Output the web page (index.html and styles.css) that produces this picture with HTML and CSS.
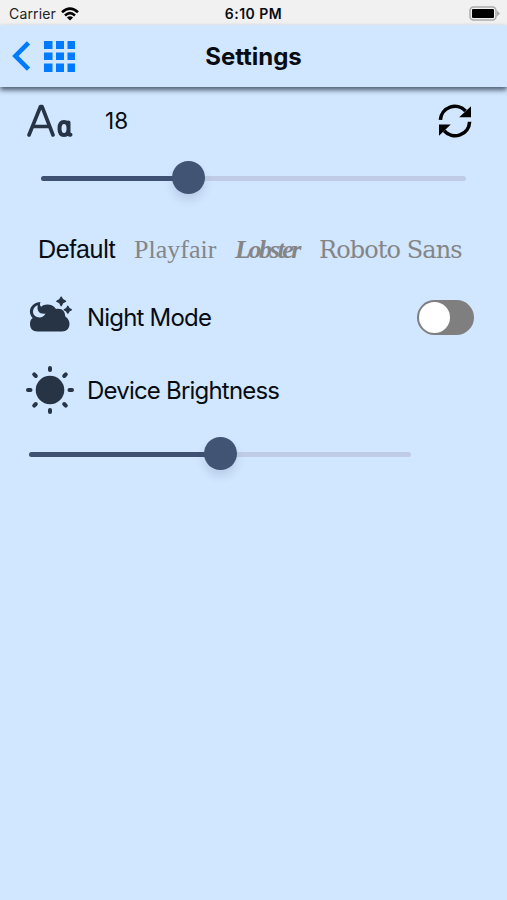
FILE: index.html
```html
<!DOCTYPE html>
<html lang="en">
<head>
    <meta charset="UTF-8">
    <meta name="viewport" content="width=device-width, initial-scale=1.0">
    <title>Settings</title>
    <link rel="stylesheet" href="styles.css">
</head>
<body>

    <div class="status-bar">
        <div class="carrier">
            <span>Carrier</span>
            <svg width="18" height="14" viewBox="0 0 18 14" fill="none" stroke="#000" stroke-width="2.6">
                <path d="M1 5.2Q9 -2 17 5.2"/>
                <path d="M4 8.4Q9 4 14 8.4"/>
                <path d="M9 13.6L5.9 10.6Q9 8 12.1 10.6Z" fill="#000" stroke="none"/>
            </svg>
        </div>
        <span class="time">6:10 PM</span>
        <div class="battery">
            <svg width="31" height="15" viewBox="0 0 31 15">
                <rect x="1" y="1" width="26" height="13" rx="3.5" fill="#f1f1f1" stroke="#aaa" stroke-width="1.5"/>
                <rect x="3" y="3" width="22" height="9" rx="1" fill="#000"/>
                <path d="M28 4.5L31 7.5L28 10.5Z" fill="#aaa"/>
            </svg>
        </div>
    </div>

    <header class="header">
        <div class="nav">
            <svg width="19" height="30" viewBox="0 0 19 30" fill="none" stroke="#007aff" stroke-width="4.6">
                <path d="M16.5 1.8L3.4 15L16.5 28.2"/>
            </svg>
            <svg class="grid-icon" width="31" height="31" viewBox="0 0 31 31" fill="#007aff">
                <path d="M0 0h8.5v8H0zM12 0h8v8h-8zM23.5 0H31v8h-7.5zM0 11.5h8.5v7.5H0zM12 11.5h8v7.5h-8zM23.5 11.5H31v7.5h-7.5zM0 22.5h8.5V31H0zM12 22.5h8V31h-8zM23.5 22.5H31V31h-7.5z"/>
            </svg>
        </div>
        <h1>Settings</h1>
    </header>

    <main class="settings">
        <div class="row size-row">
            <svg class="size-icon" width="46" height="34" viewBox="0 0 46 34" fill="none" stroke="#263445" stroke-linecap="round" stroke-linejoin="round">
                <path d="M2 31L13.5 2.5H15L26 31M6 22.5H22" stroke-width="3.6"/>
                <path d="M41.5 18.5V27Q41.5 31 43.5 30.8M41.5 24Q41.5 18 37 18Q32.5 18 32.5 24.5Q32.5 31 37 31Q41.5 31 41.5 25" stroke-width="4"/>
            </svg>
            <span class="size-value">18</span>
            <svg class="refresh" width="34" height="34" viewBox="0 0 34 34">
                <path d="M2.4 15.8A14.5 14.5 0 0 1 27.5 7M31.6 17.8A14.5 14.5 0 0 1 6.2 26.8" fill="none" stroke="#000" stroke-width="3.6"/>
                <path d="M33 2.3V13.2H21.2ZM1 31.8V20.5H12.7Z"/>
            </svg>
        </div>

        <div class="slider size-slider">
            <div class="fill" style="width: 34.8%"></div>
            <div class="thumb"></div>
        </div>

        <div class="fonts">
            <span class="font-default">Default</span>
            <span class="font-playfair">Playfair</span>
            <span class="font-lobster">Lobster</span>
            <span class="font-roboto">Roboto Sans</span>
        </div>

        <div class="row night-row">
            <svg class="row-icon" width="50" height="50" viewBox="0 0 50 50" fill="#263445">
                <path d="M12.5 39.5C7.5 39.5 5 36.5 5 32C5 29 6 27.3 7.7 26C1.5 19 6.5 10.5 15.5 10C14.4 12.5 15 13.8 16.3 14.7C19.5 11.3 28 11.7 31 17C37.5 15.8 40 19.5 40.3 24.5C43.2 26.5 44.5 29 44.5 32C44.5 36.5 41.5 39.5 37 39.5Z"/>
                <path d="M12.8 13.2C11.5 19.3 15 22.5 20.5 21.5C18.7 25.5 13.5 26.8 9.8 23.7C6.5 20.5 8 14.8 12.8 13.2Z" fill="#d1e6ff"/>
                <path d="M36.2 5.2Q36.9 8.6 40.4 9.3Q36.9 10 36.2 13.5Q35.5 10 32 9.3Q35.5 8.6 36.2 5.2ZM42.8 14.4Q43.5 17 46.2 17.7Q43.5 18.4 42.8 21Q42.1 18.4 39.4 17.7Q42.1 17 42.8 14.4Z" stroke="#263445" stroke-width="1.6" stroke-linejoin="round"/>
            </svg>
            <span class="label night-label">Night Mode</span>
            <div class="switch"><div class="knob"></div></div>
        </div>

        <div class="row bright-row">
            <svg class="row-icon" width="50" height="50" viewBox="0 0 50 50" fill="none" stroke="#263445" stroke-width="4" stroke-linecap="round">
                <circle cx="25" cy="25" r="14.3" fill="#263445" stroke="none"/>
                <path d="M25 3V5M25 45V47M3 25H5.5M44.5 25H47M9.2 9.4L10.8 11M39.2 39L40.8 40.6M9.2 40.6L10.8 39M39.2 11L40.8 9.4"/>
            </svg>
            <span class="label bright-label">Device Brightness</span>
        </div>

        <div class="slider bright-slider">
            <div class="fill" style="width: 50.2%"></div>
            <div class="thumb"></div>
        </div>
    </main>

</body>
</html>
```
FILE: styles.css
```css
* {
    box-sizing: border-box;
}
body {
    margin: 0;
    min-height: 900px;
    background: #d1e6ff;
    color: #080c12;
    font-family: Inter, Arial, sans-serif;
}
svg {
    display: block;
    flex-shrink: 0;
}
.status-bar {
    display: grid;
    grid-template-columns: 1fr auto 1fr;
    align-items: center;
    height: 25px;
    padding: 2px 7px 0 9px;
    background: #f1f1f1;
    font-size: 14px;
}
.carrier {
    display: flex;
    align-items: center;
    gap: 5px;
    color: #222;
    letter-spacing: 0.15px;
}
.time {
    margin-right: 2px;
    font-weight: 600;
    letter-spacing: 0.5px;
}
.battery {
    justify-self: end;
}
.header {
    display: grid;
    grid-template-columns: 1fr auto 1fr;
    align-items: center;
    height: 62px;
    padding: 0 12px;
    background: #d1e6ff;
    box-shadow: 0 3px 5px rgba(30, 45, 60, 0.75);
}
.header h1 {
    margin: 0;
    font-size: 24px;
    font-weight: 700;
    letter-spacing: -0.05px;
}
.nav {
    display: flex;
    align-items: center;
    gap: 13px;
}
.row {
    display: flex;
    align-items: center;
}
.size-row {
    height: 67px;
    padding: 0 35px 0 27px;
}
.size-value {
    margin-left: 32px;
    padding-bottom: 1px;
    font-size: 22.5px;
}
.refresh {
    margin-left: auto;
}
.slider {
    display: flex;
    align-items: center;
    height: 5px;
    border-radius: 3px;
    background: #c0cce6;
}
.fill {
    height: 5px;
    border-radius: 3px;
    background: #3e5173;
}
.thumb {
    flex-shrink: 0;
    width: 33px;
    height: 33px;
    margin: -2px 0 0 -17px;
    border-radius: 50%;
    background: #425474;
    box-shadow: 0 6px 8px rgba(62, 81, 115, 0.16);
}
.size-slider {
    width: 425px;
    margin: 22px 0 0 41px;
}
.fonts {
    display: flex;
    align-items: baseline;
    height: 64px;
    margin-top: 36px;
    padding-left: 38px;
    line-height: 64px;
    color: #858585;
    white-space: nowrap;
}
.font-default {
    width: 96px;
    color: #080c12;
    font-family: "Liberation Sans", Arial, sans-serif;
    font-size: 25px;
    letter-spacing: -0.3px;
}
.font-playfair {
    width: 101px;
    font-family: "Liberation Serif", serif;
    font-size: 26px;
}
.font-lobster {
    width: 84px;
    font-family: "Liberation Serif", serif;
    font-size: 26px;
    font-style: italic;
    font-weight: 700;
    letter-spacing: -2.4px;
}
.font-roboto {
    font-family: "DejaVu Serif", serif;
    font-size: 24px;
    letter-spacing: -0.9px;
}
.night-row {
    height: 72px;
    padding: 0 33px 0 25px;
}
.bright-row {
    height: 74px;
    padding-left: 25px;
}
.label {
    margin-left: 12px;
    font-size: 24px;
    letter-spacing: -0.8px;
}
.switch {
    width: 57px;
    height: 35px;
    margin-left: auto;
    padding: 2px;
    border-radius: 18px;
    background: #7f7f7f;
}
.knob {
    width: 31px;
    height: 31px;
    border-radius: 50%;
    background: #fff;
}
.bright-slider {
    width: 382px;
    margin: 25px 0 0 29px;
}
```
